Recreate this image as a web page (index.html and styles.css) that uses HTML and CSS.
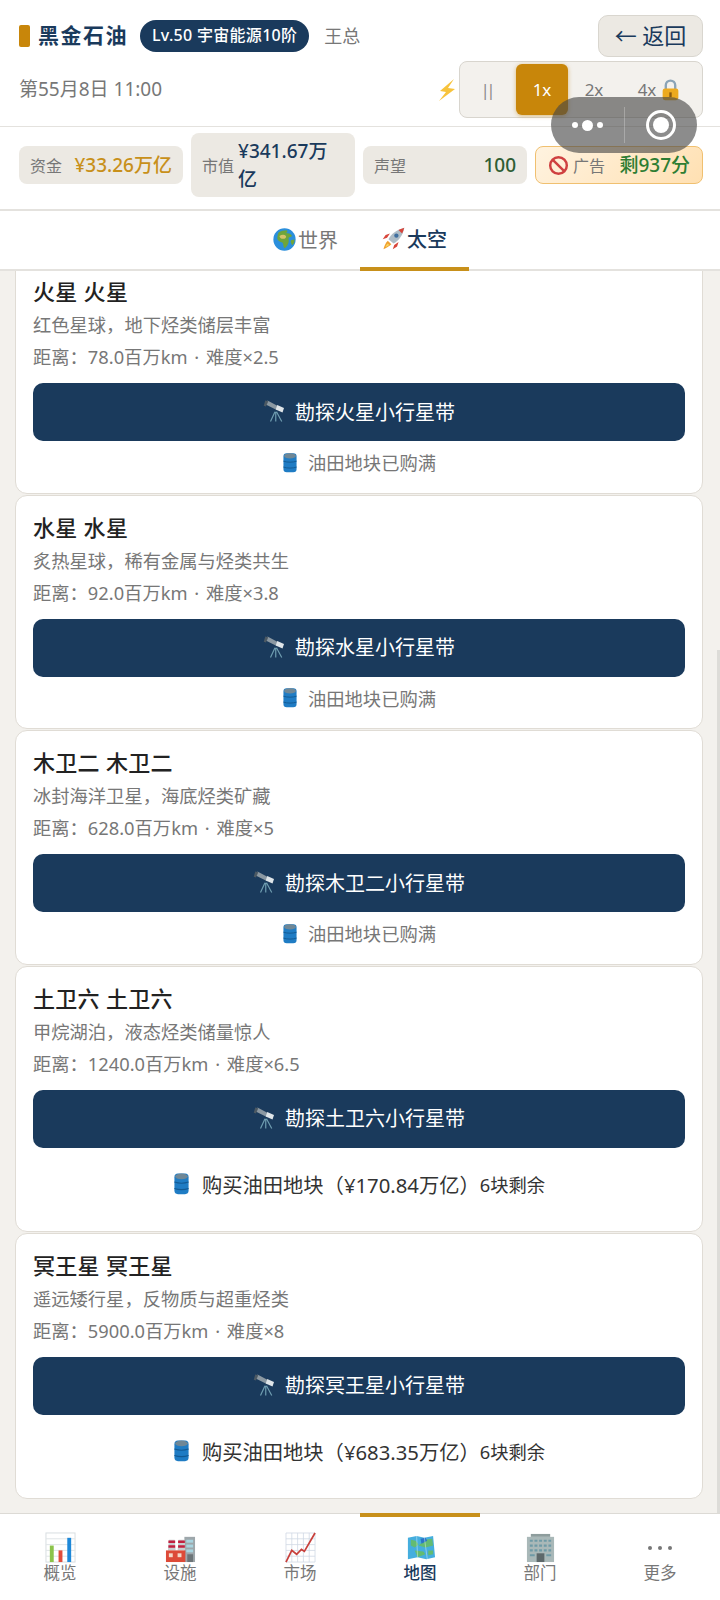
FILE: index.html
```html
<!DOCTYPE html>
<html lang="zh-CN">
<head>
  <meta charset="UTF-8">
  <meta name="viewport" content="width=device-width, initial-scale=1.0">
  <title>黑金石油</title>
  <link rel="stylesheet" href="styles.css">
</head>
<body>
  <svg class="sprites" width="0" height="0" aria-hidden="true">
    <symbol id="i-globe" viewBox="0 0 32 32">
      <circle cx="16" cy="16" r="15.500" fill="#2b8fdc"/>
      <path d="M8 6c3-2 7-3 11-3 2 1 1 3-1 4 3 0 6 1 8 3 1 2-2 3-4 3-1 3 1 6-1 9-1 3-3 5-5 6-2-2-1-6-3-8-3 0-6-2-7-5 0-4 1-7 2-9z" fill="#6fa53a"/>
      <path d="M9 11c3-2 7-2 9 0 1 2-1 4-4 4-3 0-5-2-5-4z" fill="#d6c36a"/>
      <path d="M25 17c2 0 4-1 5-1 0 3-1 6-3 8-2-2-3-5-2-7z" fill="#6fa53a"/>
    </symbol>
    <symbol id="i-rocket" viewBox="0 0 32 32">
      <path d="M7 15l-6 2 4-6 6-2zM17 25l-2 6 6-4 2-6z" fill="#d8453a"/>
      <path d="M9 17C12 10 20 4 31 1c-2 11-8 18-15 22z" fill="#aebcc6"/>
      <path d="M23 4c3-1 6-2 8-3-1 3-2 6-3 8z" fill="#d8453a"/>
      <circle cx="20" cy="12" r="3" fill="#3f6f9f"/>
      <path d="M8 19l5 5c-3 3-7 5-11 7 1-4 3-9 6-12z" fill="#f0a030"/>
      <path d="M8 23l2 2c-1 1-3 2-5 3 0-2 2-4 3-5z" fill="#f8d860"/>
    </symbol>
    <symbol id="i-scope" viewBox="0 0 32 32">
      <path d="M3 7l16 8 2-5L6 2z" fill="#8b98a2"/>
      <path d="M19 8l9 4-2 6-9-4z" fill="#dfe5e9"/>
      <path d="M3 2l4 1-3 7-3-1z" fill="#4c5963"/>
      <path d="M16 17l-6 13M17 17v13M18 17l7 13" stroke="#6f9db0" stroke-width="1.600" fill="none"/>
    </symbol>
    <symbol id="i-barrel" viewBox="0 0 24 32">
      <rect x="2" y="2" width="20" height="29" rx="5" fill="#1f7cc4"/>
      <ellipse cx="12" cy="6" rx="9" ry="4" fill="#6f8796"/>
      <path d="M2 14c6 2 14 2 20 0M2 23c6 2 14 2 20 0" stroke="#125a94" stroke-width="1.500" fill="none"/>
    </symbol>
    <symbol id="i-lock" viewBox="0 0 24 28">
      <path d="M6 13V8a6 6 0 0 1 12 0v5" stroke="#8aa4b8" stroke-width="3" fill="none"/>
      <rect x="2" y="12" width="20" height="15" rx="3" fill="#edaa1e"/>
      <rect x="10.500" y="17" width="3" height="6" fill="#8a5a10"/>
    </symbol>
    <symbol id="i-bolt" viewBox="0 0 20 24">
      <path d="M17 1L3 13l6 1-7 9 16-12-7-1z" fill="#f7c33c"/>
    </symbol>
    <symbol id="i-ban" viewBox="0 0 24 24">
      <circle cx="12" cy="12" r="9.500" fill="none" stroke="#cf4040" stroke-width="2.800"/>
      <path d="M5.500 5.500l13 13" stroke="#cf4040" stroke-width="2.800"/>
    </symbol>
    <symbol id="i-bars" viewBox="0 0 32 32">
      <rect x="1" y="1" width="30" height="30" fill="#fff" stroke="#d7dde0"/>
      <path d="M1 7h30M1 13h30M1 19h30M1 25h30" stroke="#dfe4e6"/>
      <rect x="5" y="14" width="4" height="17" fill="#8bc34a"/>
      <rect x="14" y="19" width="4" height="12" fill="#e04b3a"/>
      <rect x="23" y="6" width="4" height="25" fill="#1e88d8"/>
    </symbol>
    <symbol id="i-factory" viewBox="0 0 32 32">
      <rect x="20" y="5" width="11" height="26" fill="#9ea7ab"/>
      <rect x="22" y="8" width="7" height="3" fill="#a8d4e0"/>
      <rect x="22" y="13" width="7" height="3" fill="#a8d4e0"/>
      <rect x="22" y="18" width="7" height="3" fill="#a8d4e0"/>
      <rect x="23" y="23" width="6" height="8" fill="#6c7478"/>
      <path d="M4 8h6l1 11H3zM14 8h6l1 11h-8z" fill="#c9cdd0"/>
      <path d="M3.500 10h7M3.500 15h7M13.500 10h7M13.500 15h7" stroke="#c2203f" stroke-width="2.500"/>
      <rect x="1" y="19" width="20" height="12" fill="#dd4a38"/>
      <rect x="4" y="22" width="4" height="4" fill="#f3d8c8"/>
      <rect x="13" y="22" width="4" height="4" fill="#f3d8c8"/>
    </symbol>
    <symbol id="i-trend" viewBox="0 0 32 32">
      <path d="M1 1h30v30H1zM1 7h30M1 13h30M1 19h30M1 25h30M7 1v30M13 1v30M19 1v30M25 1v30" fill="#fff" stroke="#cfd8e4" stroke-width=".8"/>
      <path d="M1 31l6-12 5 4 5-5 3 2L31 1" fill="none" stroke="#c8403c" stroke-width="1.800"/>
    </symbol>
    <symbol id="i-map" viewBox="0 0 32 32">
      <path d="M3 6l9-2 8 2 9-2 2 22-9 2-9-2-10 2z" fill="#45aede"/>
      <path d="M6 8l5 1 3 4-4 3-4-2zM14 14l7-6 7-1 1 7-8 2zM10 19l9 1 2 3-8 3zM24 19l5 0v4l-5 1z" fill="#63bb72"/>
      <path d="M16 7l5-1 2 3-6 3z" fill="#2a74c8"/>
      <path d="M12 4l1 22M20 6l3 22" stroke="#ffffff" stroke-opacity=".4"/>
    </symbol>
    <symbol id="i-office" viewBox="0 0 32 32">
      <rect x="2" y="5" width="28" height="26" fill="#a9b8b8"/>
      <rect x="6" y="2" width="20" height="3" fill="#8e9d9d"/>
      <path d="M5 9h22M5 14h22M5 19h22" stroke="#6f9aa6" stroke-width="2.200" stroke-dasharray="3 1.800"/>
      <path d="M5 24h5M22 24h5" stroke="#6f9aa6" stroke-width="2.200"/>
      <rect x="12" y="22" width="8" height="9" fill="#5d686a"/>
    </symbol>
  </svg>

  <div class="app">
    <header class="topbar">
      <div class="top-row">
        <span class="brand-mark"></span>
        <span class="brand">黑金石油</span>
        <span class="level">Lv.50 宇宙能源10阶</span>
        <span class="boss">王总</span>
        <button class="back">← 返回</button>
      </div>
      <div class="time-row">
        <span class="date">第55月8日 11:00</span>
        <svg class="bolt"><use href="#i-bolt"/></svg>
        <div class="speed">
          <span class="speed-item pause">||</span>
          <span class="speed-item on">1x</span>
          <span class="speed-item">2x</span>
          <span class="speed-item wide">4x <svg class="lock"><use href="#i-lock"/></svg></span>
        </div>
      </div>
    </header>

    <div class="capsule">
      <span class="capsule-dots"><i></i><i class="big"></i><i></i></span>
      <span class="capsule-line"></span>
      <span class="capsule-ring"></span>
    </div>

    <section class="stats">
      <div class="stat"><span class="stat-label">资金</span><span class="stat-value gold">¥33.26万亿</span></div>
      <div class="stat"><span class="stat-label">市值</span><span class="stat-value navy">¥341.67万亿</span></div>
      <div class="stat"><span class="stat-label">声望</span><span class="stat-value green">100</span></div>
      <div class="stat ad">
        <svg class="ban"><use href="#i-ban"/></svg>
        <span class="stat-label">广告</span>
        <span class="stat-value leaf">剩937分</span>
      </div>
    </section>

    <nav class="tabs">
      <a class="tab"><svg class="tab-icon"><use href="#i-globe"/></svg>世界</a>
      <a class="tab active"><svg class="tab-icon"><use href="#i-rocket"/></svg>太空</a>
    </nav>

    <main class="content">
      <div class="scrollbar"></div>
      <div class="list">
        <article class="card">
          <h3>火星 火星</h3>
          <p>红色星球，地下烃类储层丰富</p>
          <p>距离：78.0百万km · 难度×2.5</p>
          <button class="explore"><svg class="scope"><use href="#i-scope"/></svg>勘探火星小行星带</button>
          <div class="full"><svg class="barrel"><use href="#i-barrel"/></svg>油田地块已购满</div>
        </article>
        <article class="card">
          <h3>水星 水星</h3>
          <p>炙热星球，稀有金属与烃类共生</p>
          <p>距离：92.0百万km · 难度×3.8</p>
          <button class="explore"><svg class="scope"><use href="#i-scope"/></svg>勘探水星小行星带</button>
          <div class="full"><svg class="barrel"><use href="#i-barrel"/></svg>油田地块已购满</div>
        </article>
        <article class="card">
          <h3>木卫二 木卫二</h3>
          <p>冰封海洋卫星，海底烃类矿藏</p>
          <p>距离：628.0百万km · 难度×5</p>
          <button class="explore"><svg class="scope"><use href="#i-scope"/></svg>勘探木卫二小行星带</button>
          <div class="full"><svg class="barrel"><use href="#i-barrel"/></svg>油田地块已购满</div>
        </article>
        <article class="card">
          <h3>土卫六 土卫六</h3>
          <p>甲烷湖泊，液态烃类储量惊人</p>
          <p>距离：1240.0百万km · 难度×6.5</p>
          <button class="explore"><svg class="scope"><use href="#i-scope"/></svg>勘探土卫六小行星带</button>
          <div class="buy"><svg class="barrel large"><use href="#i-barrel"/></svg>购买油田地块（¥170.84万亿）<small>6块剩余</small></div>
        </article>
        <article class="card">
          <h3>冥王星 冥王星</h3>
          <p>遥远矮行星，反物质与超重烃类</p>
          <p>距离：5900.0百万km · 难度×8</p>
          <button class="explore"><svg class="scope"><use href="#i-scope"/></svg>勘探冥王星小行星带</button>
          <div class="buy"><svg class="barrel large"><use href="#i-barrel"/></svg>购买油田地块（¥683.35万亿）<small>6块剩余</small></div>
        </article>
      </div>
    </main>

    <footer class="bottom-nav">
      <a class="nav-item"><svg class="nav-icon"><use href="#i-bars"/></svg>概览</a>
      <a class="nav-item"><svg class="nav-icon"><use href="#i-factory"/></svg>设施</a>
      <a class="nav-item"><svg class="nav-icon"><use href="#i-trend"/></svg>市场</a>
      <a class="nav-item active"><svg class="nav-icon"><use href="#i-map"/></svg>地图</a>
      <a class="nav-item"><svg class="nav-icon"><use href="#i-office"/></svg>部门</a>
      <a class="nav-item"><span class="nav-more"><i></i><i></i><i></i></span>更多</a>
    </footer>
  </div>
</body>
</html>
```

FILE: styles.css
```css
* {
  box-sizing: border-box;
}
body {
  margin: 0;
  font-family: "Noto Sans", "Noto Sans CJK SC", sans-serif;
  background: #fff;
  color: #333;
}
.sprites {
  position: absolute;
}
.app {
  position: relative;
  display: flex;
  flex-direction: column;
  height: 1600px;
  overflow: hidden;
}

/* header */
.topbar {
  height: 127px;
  padding: 15px 17px 0 19px;
  border-bottom: 1px solid #e4e2de;
}
.top-row {
  display: flex;
  align-items: center;
  height: 42px;
}
.brand-mark {
  width: 11px;
  height: 22px;
  border-radius: 2px;
  background: #c8860a;
  margin-right: 8px;
}
.brand {
  font-size: 21px;
  font-weight: 600;
  letter-spacing: 1.500px;
  color: #1a3a5c;
  margin: -4px 12px 0 0;
}
.level {
  height: 32px;
  line-height: 31px;
  padding: 0 12px;
  border-radius: 16px;
  background: #1a3a5c;
  color: #fff;
  font-size: 16px;
  font-weight: 500;
  letter-spacing: .3px;
}
.boss {
  margin: -2px 0 0 15px;
  font-size: 18px;
  color: #777;
}
.back {
  margin-left: auto;
  width: 105px;
  height: 42px;
  border: 1px solid #d9d6cf;
  border-radius: 10px;
  background: #ece9e3;
  color: #1a3a5c;
  font-family: inherit;
  font-size: 22px;
  line-height: 36px;
  padding: 0 0 3px;
}
.time-row {
  display: flex;
  align-items: center;
  margin-top: 4px;
}
.date {
  font-size: 19px;
  color: #777;
  margin: -4px auto 0 0;
}
.bolt {
  width: 20px;
  height: 24px;
  margin-right: 2px;
}
.speed {
  display: flex;
  align-items: center;
  width: 244px;
  height: 57px;
  padding: 2px;
  border: 1px solid #d8d5ce;
  border-radius: 8px;
  background: #f3f1ed;
}
.speed-item {
  display: flex;
  align-items: center;
  justify-content: center;
  gap: 5px;
  width: 52px;
  height: 51px;
  border-radius: 6px;
  font-size: 17px;
  color: #777;
}
.speed-item.pause {
  width: 52px;
  margin-right: 2px;
  font-size: 16px;
  letter-spacing: -3px;
  padding-right: 3px;
  color: #888;
}
.speed-item.on {
  background: #c8860a;
  color: #fff;
  box-shadow: 0 1px 4px rgba(200, 134, 10, .5);
}
.speed-item.wide {
  width: 70px;
  margin-left: 4px;
}
.lock {
  width: 19px;
  height: 22px;
}

/* floating mini program capsule */
.capsule {
  position: absolute;
  left: 551px;
  top: 97px;
  width: 146px;
  height: 56px;
  border-radius: 28px;
  background: rgba(70, 70, 70, .62);
  display: flex;
  align-items: center;
  z-index: 5;
}
.capsule-dots {
  display: flex;
  align-items: center;
  justify-content: center;
  gap: 4px;
  width: 73px;
}
.capsule-dots i {
  width: 6px;
  height: 6px;
  border-radius: 50%;
  background: #fff;
}
.capsule-dots i.big {
  width: 11px;
  height: 11px;
}
.capsule-line {
  width: 1px;
  height: 36px;
  background: rgba(255, 255, 255, .25);
}
.capsule-ring {
  position: relative;
  width: 30px;
  height: 30px;
  margin-left: 21px;
  border: 3px solid #fff;
  border-radius: 50%;
}
.capsule-ring::after {
  content: "";
  position: absolute;
  inset: 4px;
  border-radius: 50%;
  background: #fff;
}

/* stats */
.stats {
  display: grid;
  grid-template-columns: 164px 164px 164px 168px;
  gap: 8px;
  align-items: center;
  height: 84px;
  padding: 0 17px 6px 19px;
  border-bottom: 2px solid #e4e2de;
}
.stat {
  display: flex;
  align-items: center;
  justify-content: space-between;
  gap: 4px;
  padding: 4px 11px;
  min-height: 38px;
  border-radius: 8px;
  background: #ece9e3;
}
.stat-label {
  flex: none;
  font-size: 16px;
  color: #777;
}
.stat-value {
  font-size: 19px;
  font-weight: 500;
  line-height: 28px;
}
.gold {
  color: #c8901a;
}
.navy {
  color: #1a3a5c;
  flex: 1;
  max-width: 106px;
}
.green {
  color: #2f5d34;
}
.leaf {
  color: #2e7d32;
  margin-left: auto;
}
.stat.ad {
  padding: 4px 12px;
  background: linear-gradient(135deg, #fff3e0, #ffe0b2);
  border: 1px solid #f0c070;
}
.ban {
  flex: none;
  width: 21px;
  height: 21px;
}

/* tabs */
.tabs {
  display: flex;
  justify-content: center;
  height: 60px;
  border-bottom: 2px solid #e4e2de;
}
.tab {
  display: flex;
  align-items: center;
  justify-content: center;
  gap: 2px;
  width: 109px;
  padding-bottom: 2px;
  font-size: 20px;
  color: #777;
}
.tab.active {
  color: #1a3a5c;
  font-weight: 500;
  border-bottom: 4px solid #c8901a;
  margin-bottom: -2px;
}
.tab-icon {
  width: 23px;
  height: 23px;
}

/* planet list */
.content {
  position: relative;
  flex: 1;
  overflow: hidden;
  background: #f3f1ed;
}
.scrollbar {
  position: absolute;
  right: 0;
  top: 379px;
  bottom: 0;
  width: 3px;
  background: #dddcd8;
}
.list {
  display: flex;
  flex-direction: column;
  gap: 1px;
  margin-top: -12px;
  padding: 0 17px 0 15px;
}
.card {
  padding: 16px 17px 0;
  height: 234.500px;
  border: 1px solid #e0dcd5;
  border-radius: 12px;
  background: #fff;
}
.card:nth-child(n+4) {
  height: 266px;
}
.card h3 {
  margin: 0 0 3px;
  font-size: 22px;
  line-height: 30px;
  font-weight: 500;
  letter-spacing: .3px;
  color: #222;
}
.card p {
  margin: 0;
  font-size: 18.300px;
  line-height: 32px;
  word-spacing: 2px;
  color: #777;
}
.explore {
  display: flex;
  align-items: center;
  justify-content: center;
  gap: 8px;
  width: 100%;
  height: 58px;
  margin-top: 10px;
  padding: 0 0 2px;
  border: 0;
  border-radius: 10px;
  background: #1a3a5c;
  color: #fff;
  font-family: inherit;
  font-size: 20px;
}
.scope {
  width: 24px;
  height: 24px;
}
.full,
.buy {
  display: flex;
  align-items: center;
  justify-content: center;
}
.full {
  gap: 10px;
  height: 42px;
  font-size: 18.300px;
  color: #777;
}
.buy {
  gap: 12px;
  height: 72px;
  font-size: 20.300px;
  color: #333;
}
.buy small {
  font-size: 18.300px;
  margin-left: -12px;
}
.barrel {
  width: 16px;
  height: 21px;
}
.barrel.large {
  width: 17px;
  height: 23px;
}

/* bottom nav */
.bottom-nav {
  display: grid;
  grid-template-columns: repeat(6, 1fr);
  height: 87px;
  border-top: 1px solid #dcdad5;
}
.nav-item {
  position: relative;
  display: flex;
  flex-direction: column;
  align-items: center;
  padding-top: 18px;
  font-size: 16.500px;
  line-height: 20px;
  color: #777;
}
.nav-item.active {
  color: #1a3a5c;
  font-weight: 500;
}
.nav-item.active::before {
  content: "";
  position: absolute;
  left: 0;
  right: 0;
  top: -1px;
  height: 4px;
  background: #c8901a;
}
.nav-icon {
  width: 31px;
  height: 31px;
}
.nav-more {
  display: flex;
  align-items: center;
  justify-content: center;
  gap: 6px;
  height: 31px;
}
.nav-more i {
  width: 4px;
  height: 4px;
  border-radius: 50%;
  background: #777;
}
```
